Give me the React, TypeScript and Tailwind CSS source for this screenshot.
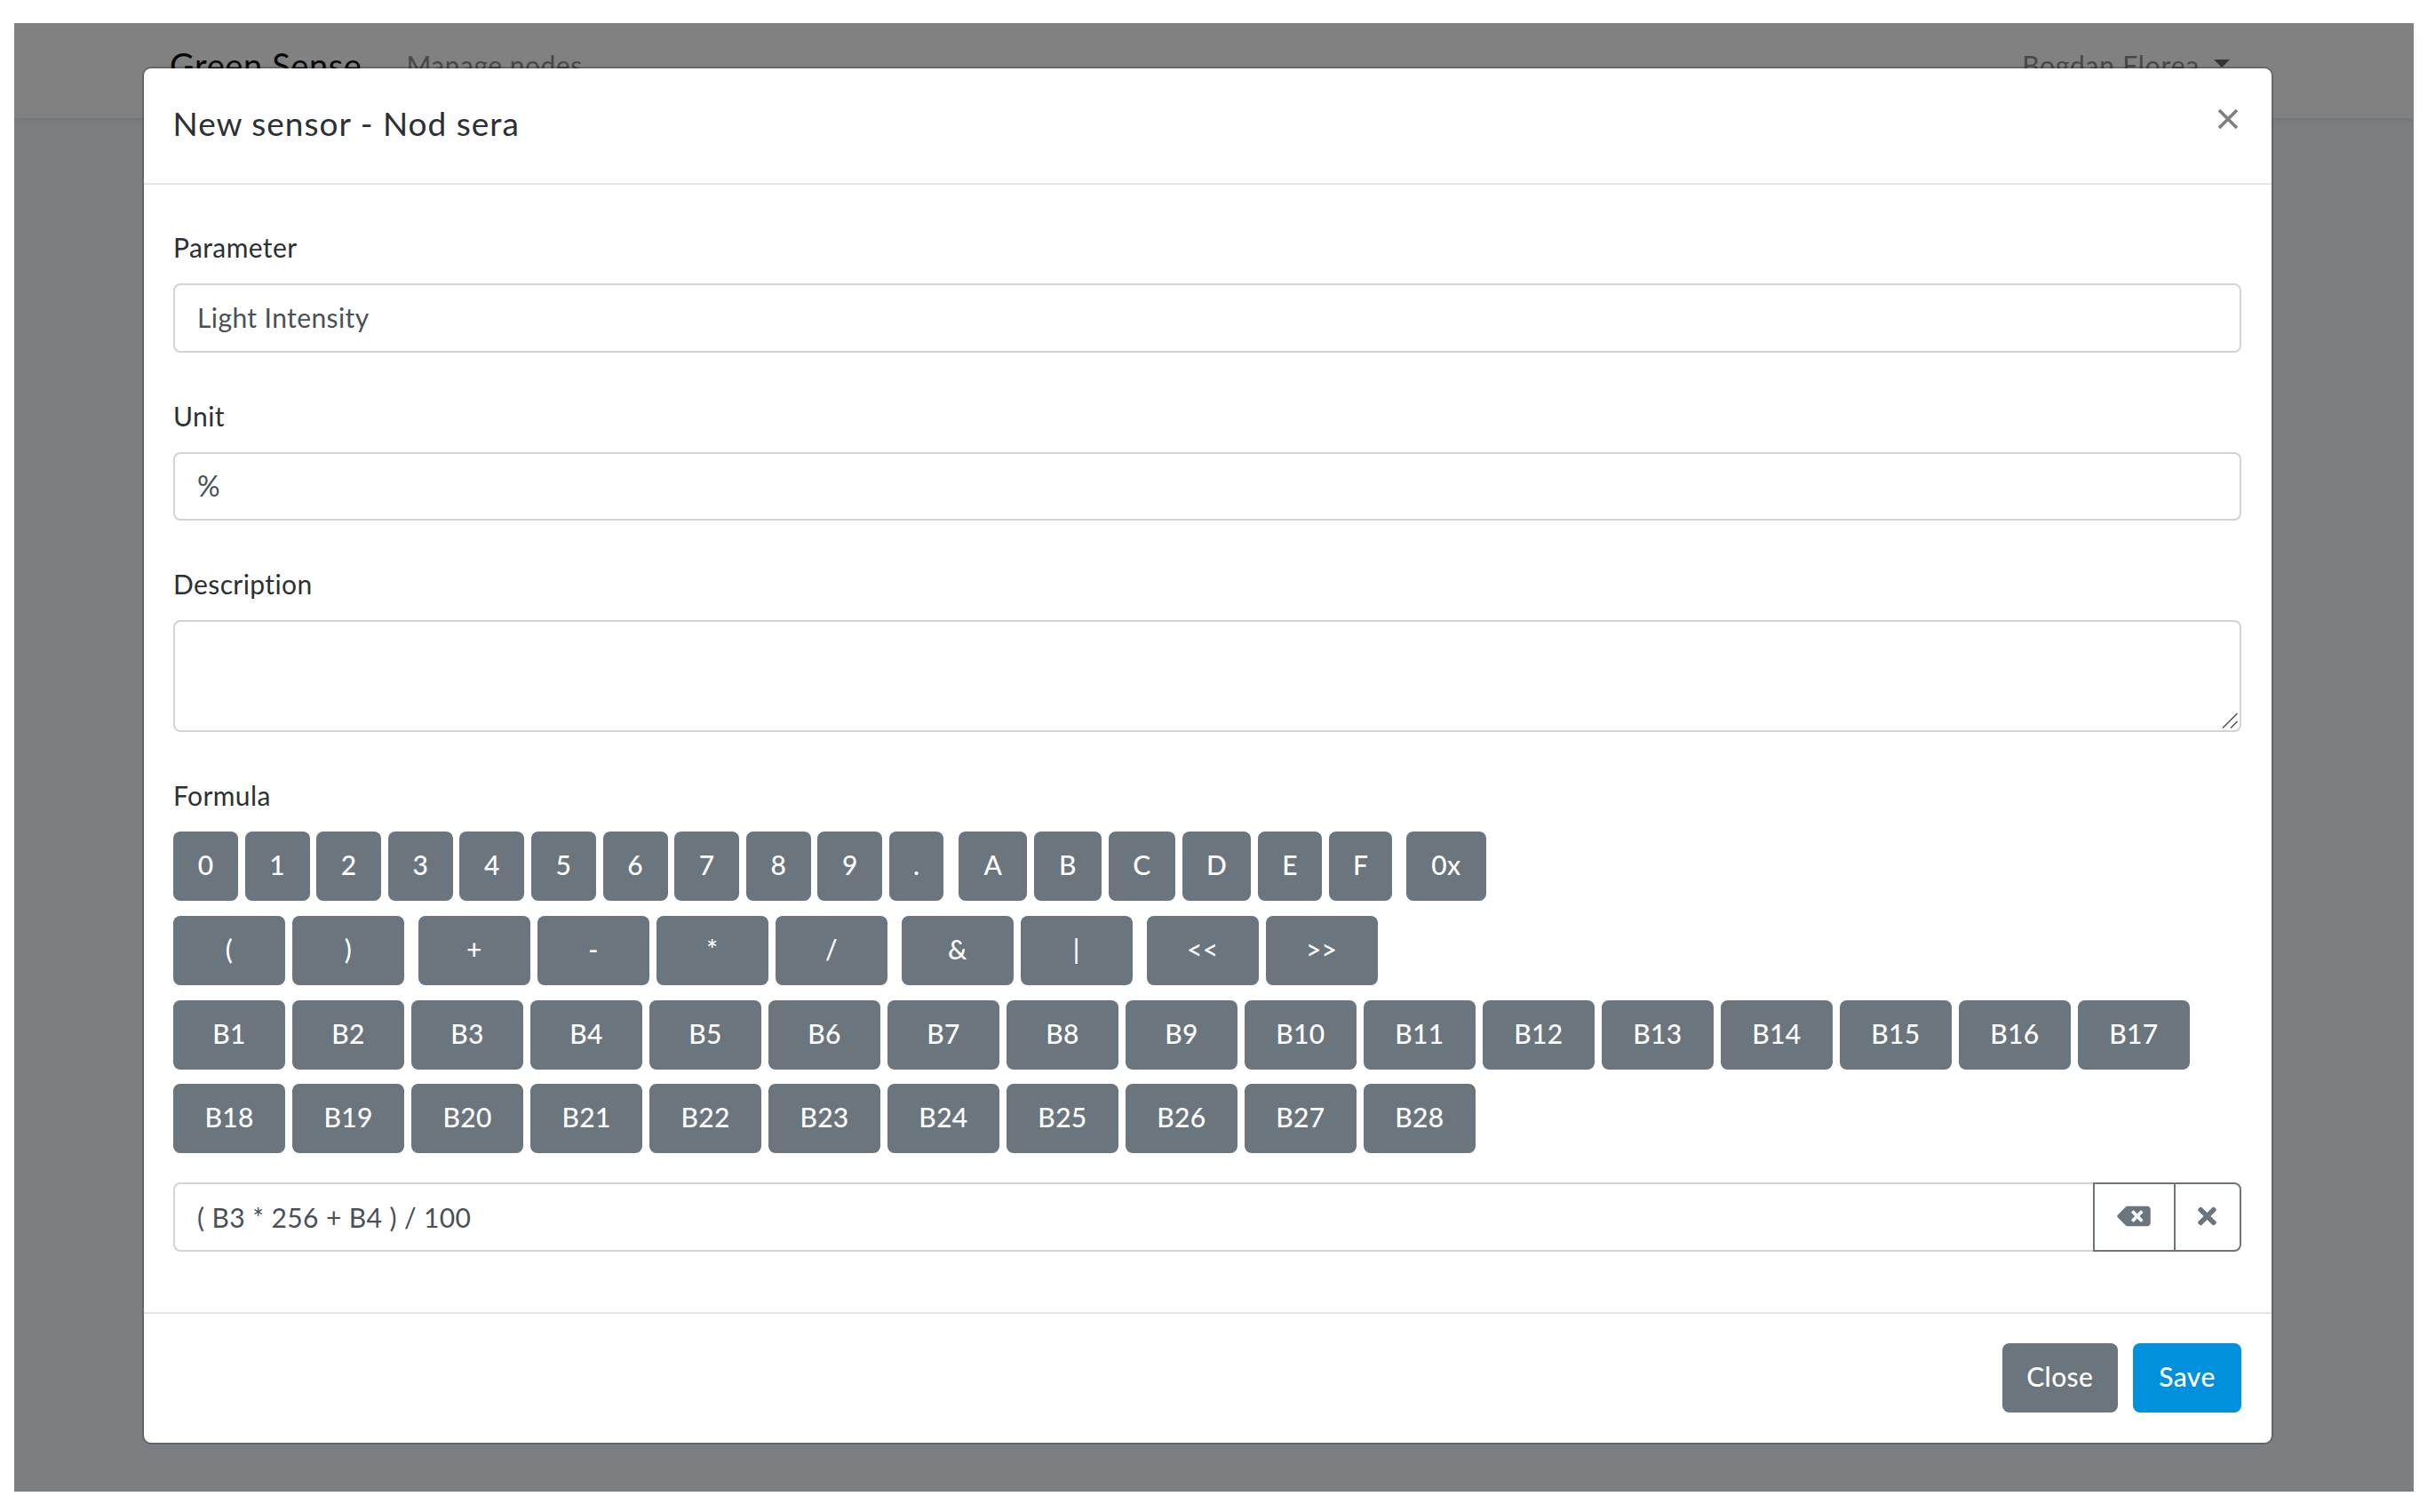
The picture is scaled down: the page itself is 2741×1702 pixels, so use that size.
import { useState } from 'react';
import type { ReactNode } from 'react';
import { FaBackspace, FaTimes } from 'react-icons/fa';

interface KeyProps {
  label: string;
  className: string;
  onPress: (label: string) => void;
}

const digits = ['0', '1', '2', '3', '4', '5', '6', '7', '8', '9'];

const hexKeys = [
  { label: 'A', width: 'w-[77px]' },
  { label: 'B', width: 'w-[75.5px]' },
  { label: 'C', width: 'w-[75.5px]' },
  { label: 'D', width: 'w-[77.5px]' },
  { label: 'E', width: 'w-[72px]' },
  { label: 'F', width: 'w-[71.5px]' },
];

const operatorGroups = [['(', ')'], ['+', '-', '*', '/'], ['&', '|'], ['<<', '>>']];

const byteKeys = Array.from({ length: 28 }, (_, i) => `B${i + 1}`);

function Key({ label, className, onPress }: KeyProps) {
  return (
    <button
      type="button"
      onClick={() => onPress(label)}
      className={`flex h-[78px] shrink-0 items-center justify-center rounded-lg bg-[#6a757e] pb-[3px] font-medium text-white tracking-[0.3px] ${className}`}
    >
      {label}
    </button>
  );
}

function Label({ children, className = '' }: { children: ReactNode; className?: string }) {
  return (
    <label className={`mb-[17px] block h-[48px] leading-[48px] tracking-[0.4px] text-[#2c3034] ${className}`}>{children}</label>
  );
}

export default function App() {
  const [parameter, setParameter] = useState('Light Intensity');
  const [unit, setUnit] = useState('%');
  const [description, setDescription] = useState('');
  const [tokens, setTokens] = useState(['(', 'B3', '*', '256', '+', 'B4', ')', '/', '100']);

  const press = (label: string) => setTokens((prev) => [...prev, label]);

  return (
    <div className="h-[1702px] w-[2741px] overflow-hidden bg-white pt-[26px] pl-[16px] font-[Lato,sans-serif] text-[30px]">
      <div className="relative h-[1653px] w-[2701px] bg-[#7b7f81]">
        <nav className="flex h-[107px] items-start bg-[#818181] pt-[14px] pr-[207px] pl-[175px] leading-[66px] shadow-[0_4px_6px_rgba(0,0,0,0.06)]">
          <span className="text-[38px] tracking-[0.6px] text-[#090909]">Green Sense</span>
          <span className="ml-[50px] tracking-[0.5px] text-[#484848]">Manage nodes</span>
          <span className="ml-auto tracking-[0.8px] text-[#484848]">Bogdan Florea</span>
          <svg className="mt-[27px] ml-[16px] h-[9px] w-[18px]" viewBox="0 0 18 9">
            <path d="M0 0h18L9 9z" fill="#353535" />
          </svg>
        </nav>

        <div className="absolute top-[49px] left-[144px] flex h-[1551px] w-[2399px] flex-col rounded-[10px] border-2 border-black/20 bg-white bg-clip-padding">
          <header className="flex h-[131px] shrink-0 justify-between border-b-2 border-[#e3e6e8] pr-[37px] pl-[32.5px]">
            <h5 className="pt-[32px] text-[37px] leading-[60px] tracking-[1px] text-[#2c3034]">New sensor - Nod sera</h5>
            <button type="button" aria-label="Close" className="mt-[45px] h-[24px] w-[24px]">
              <svg viewBox="0 0 24 24" fill="none" stroke="#808080" strokeWidth="3.8">
                <path d="M2 2l20 20M22 2L2 22" />
              </svg>
            </button>
          </header>

          <main className="flex grow flex-col pt-[46px] pr-[34px] pl-[33px]">
            <Label>Parameter</Label>
            <input
              value={parameter}
              onChange={(e) => setParameter(e.target.value)}
              className="mb-[47px] h-[77.5px] w-full rounded-lg border-2 border-[#ced4da] px-[25px] pb-[2px] tracking-[0.4px] text-[#495057] outline-none"
            />
            <Label>Unit</Label>
            <input
              value={unit}
              onChange={(e) => setUnit(e.target.value)}
              className="mb-[47px] h-[77.5px] w-full rounded-lg border-2 border-[#ced4da] px-[25px] pb-[2px] text-[32px] text-[#495057] outline-none"
            />
            <Label>Description</Label>
            <div className="relative mb-[47px] h-[126px]">
              <textarea
                value={description}
                onChange={(e) => setDescription(e.target.value)}
                className="block h-full w-full resize-none rounded-lg border-2 border-[#ced4da] px-[25px] text-[#495057] outline-none"
              />
              <svg className="absolute right-[3px] bottom-[3px] h-[20px] w-[20px]" viewBox="0 0 20 20" stroke="#555" strokeWidth="1.6">
                <path d="M2 18.5L18.5 2M11 18.5l7.5-7.5" />
              </svg>
            </div>
            <Label>Formula</Label>

            <div className="flex flex-col gap-[16.8px]">
              <div className="flex">
                <div className="flex gap-[7.6px]">
                  {digits.map((d) => (
                    <Key key={d} label={d} className="w-[73px]" onPress={press} />
                  ))}
                  <Key label="." className="w-[61.5px]" onPress={press} />
                </div>
                <div className="ml-[17px] flex gap-[7.8px]">
                  {hexKeys.map((k) => (
                    <Key key={k.label} label={k.label} className={k.width} onPress={press} />
                  ))}
                </div>
                <Key label="0x" className="ml-[15.5px] w-[90px]" onPress={press} />
              </div>
              <div className="flex gap-[15.8px]">
                {operatorGroups.map((group) => (
                  <div key={group[0]} className="flex gap-[7.9px]">
                    {group.map((op) => (
                      <Key key={op} label={op} className="w-[126.1px]" onPress={press} />
                    ))}
                  </div>
                ))}
              </div>
              <div className="flex flex-wrap gap-x-[7.9px] gap-y-[16.8px]">
                {byteKeys.map((b) => (
                  <Key key={b} label={b} className="w-[126.1px]" onPress={press} />
                ))}
              </div>
            </div>

            <div className="mt-[33px] flex h-[78px]">
              <input
                readOnly
                value={tokens.join(' ')}
                className="min-w-0 grow rounded-l-lg border-2 border-r-0 border-[#ced4da] px-[25px] tracking-[0.4px] text-[#495057] outline-none"
              />
              <button
                type="button"
                aria-label="Remove last"
                onClick={() => setTokens((prev) => prev.slice(0, -1))}
                className="flex w-[91px] items-center justify-center border-2 border-r-0 border-[#6a757e] pr-[2px] pb-[3px] text-[#6a757e]"
              >
                <FaBackspace className="h-[30px] w-[38px]" />
              </button>
              <button
                type="button"
                aria-label="Clear"
                onClick={() => setTokens([])}
                className="flex w-[76px] items-center justify-center rounded-r-lg border-2 border-[#6a757e] pr-[2px] pb-[3px] text-[#6a757e]"
              >
                <FaTimes className="h-[30px] w-[21px]" />
              </button>
            </div>
          </main>

          <footer className="flex h-[147px] shrink-0 justify-end gap-[17px] border-t-2 border-[#e3e6e8] pt-[33px] pr-[34px]">
            <button type="button" className="h-[78px] w-[130.5px] rounded-lg bg-[#6a757e] pb-[3px] font-medium tracking-[0.4px] text-white">
              Close
            </button>
            <button type="button" className="h-[78px] w-[122px] rounded-lg bg-[#0090dc] pb-[3px] font-medium tracking-[0.4px] text-white">
              Save
            </button>
          </footer>
        </div>
      </div>
    </div>
  );
}
